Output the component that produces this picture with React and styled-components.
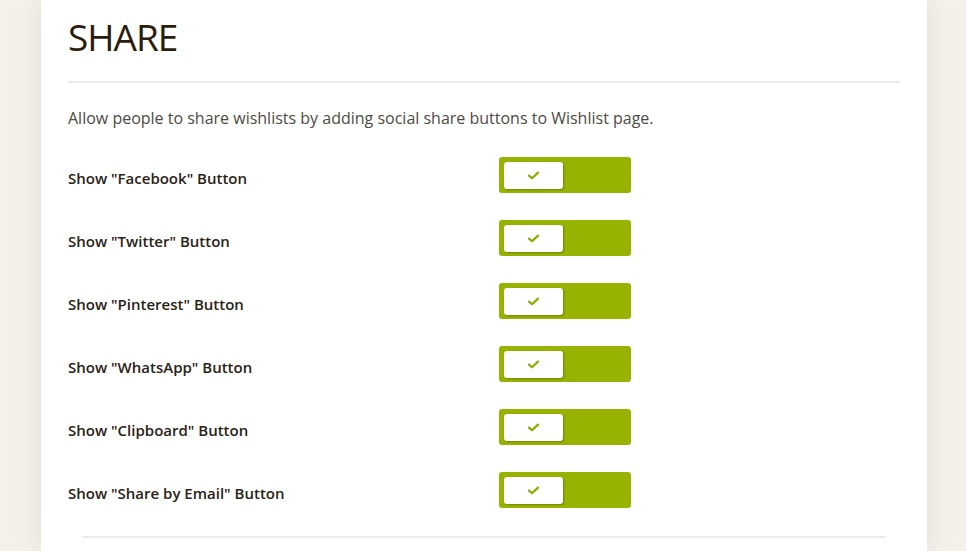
import React from 'react'
import styled, { createGlobalStyle } from 'styled-components'

const GlobalStyle = createGlobalStyle`
  html, body {
    margin: 0;
    padding: 0;
    background: #f5f1ea;
    font-family: "Open Sans", "Noto Sans", sans-serif;
    overflow: hidden;
  }
`

const Page = styled.div`
  display: flex;
  padding-left: 41px;
  height: 551px;
`

const Panel = styled.section`
  width: 886px;
  box-sizing: border-box;
  padding: 14px 27px 0;
  background: #fff;
  box-shadow: 0 0 28px rgba(120, 100, 70, 0.14);
`

const Title = styled.h2`
  margin: 0;
  font-size: 37px;
  line-height: 46px;
  font-weight: 400;
  color: #2a1d0c;
  letter-spacing: -1px;
`

const Rule = styled.hr`
  border: 0;
  height: 2px;
  background: #ebebeb;
  margin: ${(p) => (p.$inset ? '28px 15px 0' : '21px 0 0')};
`

const Intro = styled.p`
  margin: 23px 0 0;
  font-size: 16px;
  line-height: 24px;
  color: #4f4a44;
`

const List = styled.div`
  display: flex;
  flex-direction: column;
  gap: 27px;
  margin-top: 27px;
`

const Row = styled.div`
  display: flex;
  align-items: center;
  height: 36px;
`

const Label = styled.span`
  width: 431px;
  padding-top: 6px;
  font-size: 15px;
  font-weight: 600;
  color: #2a2216;
`

const Toggle = styled.button`
  display: flex;
  align-items: center;
  width: 132px;
  height: 36px;
  padding: 0 0 0 5px;
  border: 0;
  border-radius: 3px;
  background: #97b200;
  cursor: pointer;
`

const Knob = styled.span`
  display: flex;
  align-items: center;
  justify-content: center;
  width: 59px;
  height: 27px;
  border-radius: 3px;
  background: #fff;
  box-shadow: 1px 1px 2px rgba(0, 0, 0, 0.25);
`

const Check = () => (
  <svg width="11" height="9" viewBox="0 0 11 9">
    <path d="M1 4.6 L4 7.3 L10 1.6" fill="none" stroke="#8cad00" strokeWidth="2.2" strokeLinecap="round" strokeLinejoin="round" />
  </svg>
)

const items = ['Facebook', 'Twitter', 'Pinterest', 'WhatsApp', 'Clipboard', 'Share by Email']

export default function App() {
  return (
    <>
      <GlobalStyle />
      <Page>
        <Panel>
          <Title>SHARE</Title>
          <Rule />
          <Intro>Allow people to share wishlists by adding social share buttons to Wishlist page.</Intro>
          <List>
            {items.map((name) => (
              <Row key={name}>
                <Label>Show "{name}" Button</Label>
                <Toggle aria-pressed="true">
                  <Knob>
                    <Check />
                  </Knob>
                </Toggle>
              </Row>
            ))}
          </List>
          <Rule $inset />
        </Panel>
      </Page>
    </>
  )
}
